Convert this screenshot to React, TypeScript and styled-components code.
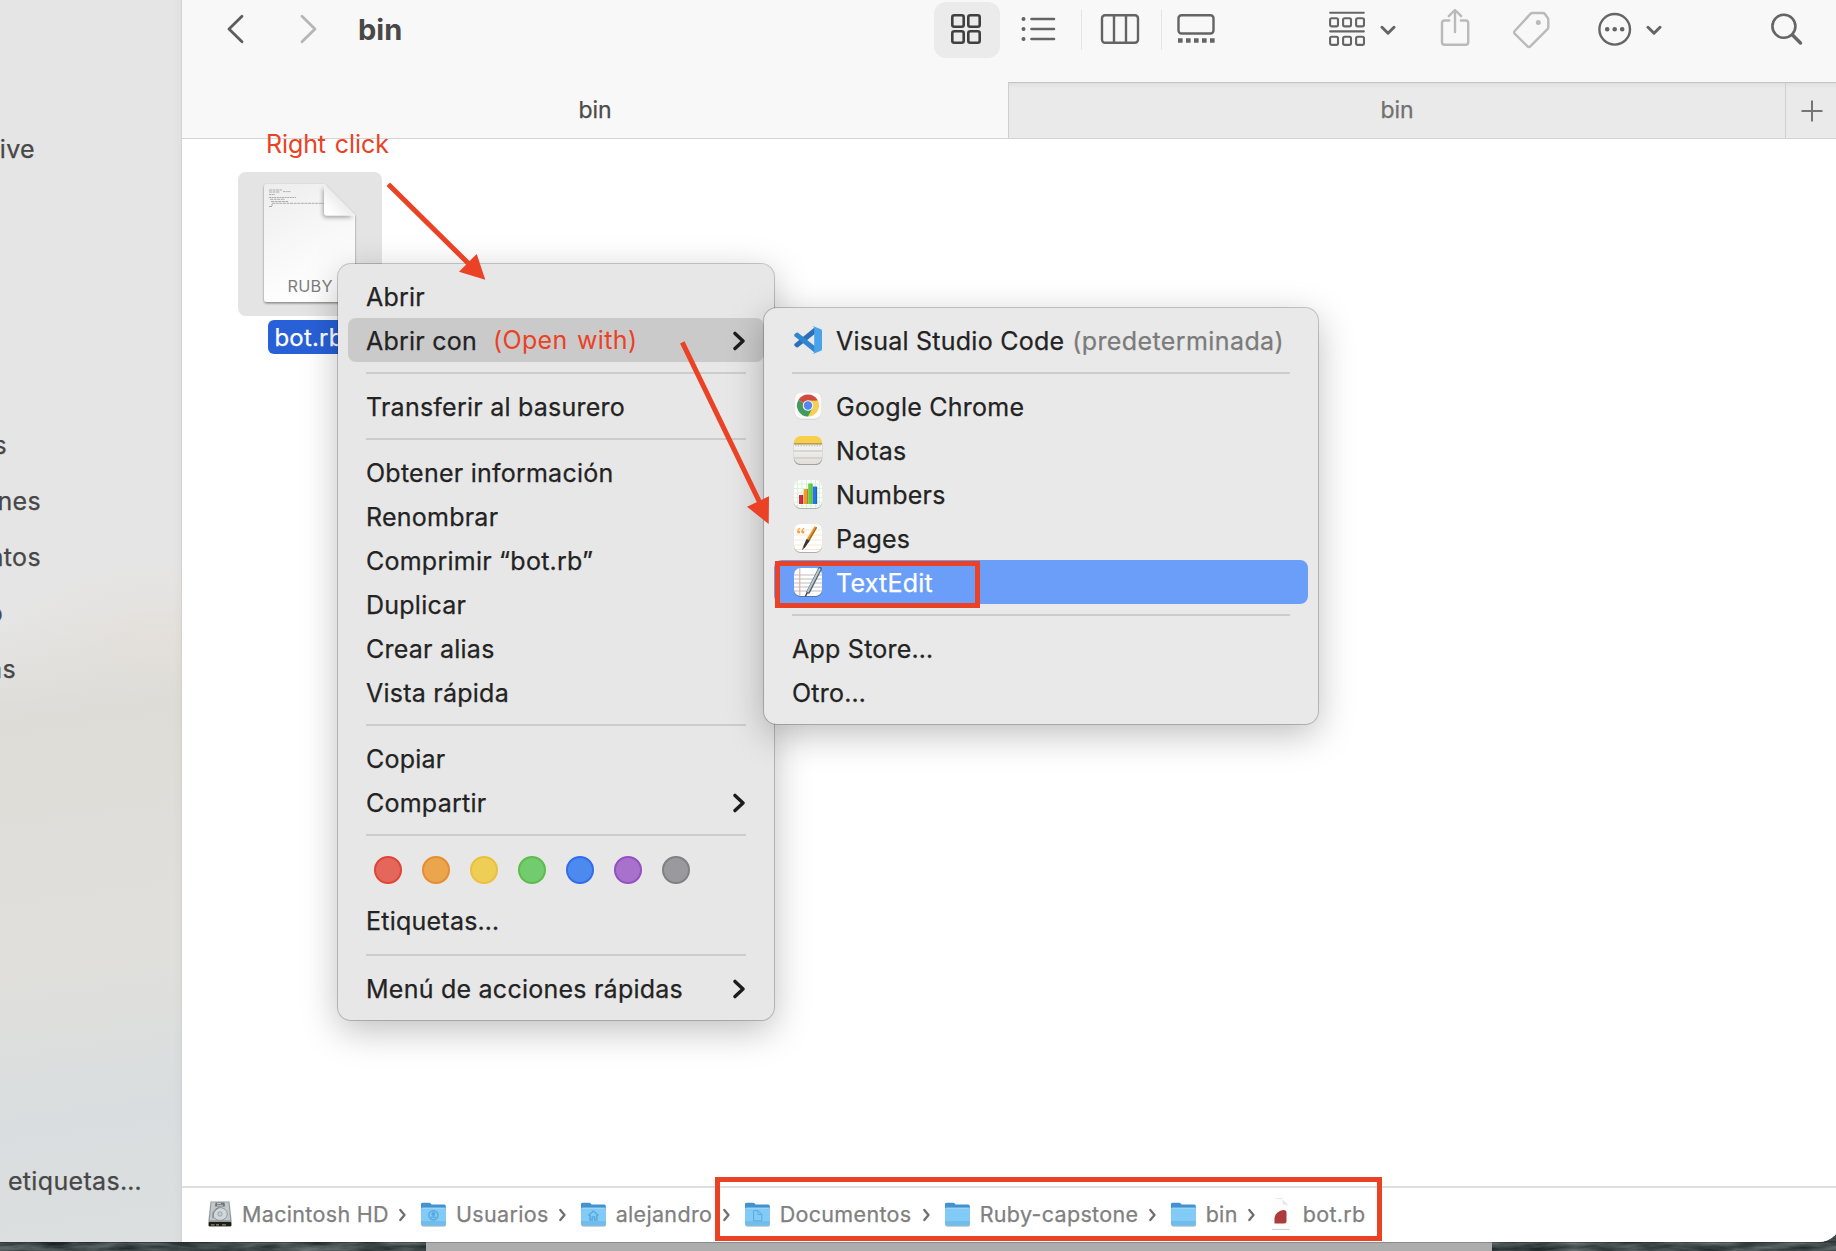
import React from "react";
import styled, { createGlobalStyle, css } from "styled-components";

const RED = "#eb4125";
const FONT = `Inter, "Liberation Sans", sans-serif`;

const GlobalStyle = createGlobalStyle`
  * { box-sizing: border-box; }
  body { margin: 0; overflow: hidden; background: #3c4546; }
`;

/* ---------- window frame ---------- */

const Desktop = styled.div`
  position: relative;
  width: 1836px;
  height: 1251px;
  overflow: hidden;
  font-family: ${FONT};
  font-size: 25px;
  letter-spacing: 0.24px;
  -webkit-text-stroke: 0.25px currentColor;
  color: #232323;
  white-space: nowrap;
`;

const Wallpaper = styled.svg`
  position: absolute;
  left: 0;
  bottom: 0;
`;

const Window = styled.div`
  position: relative;
  display: flex;
  width: 1841px;
  height: 1242px;
  background: #fff;
  border-radius: 0 0 22px 0;
  overflow: hidden;
`;

const Sidebar = styled.nav`
  display: flex;
  flex-direction: column;
  flex: 0 0 182px;
  padding-top: 121px;
  border-right: 1px solid #d3d3d3;
  color: #474747;
  letter-spacing: 0.35px;
  overflow: hidden;
  background:
    linear-gradient(90deg, transparent 96%, rgba(0, 0, 0, 0.025)),
    radial-gradient(ellipse 180px 75px at 182px 635px, rgba(230, 221, 212, 0.5), transparent),
    linear-gradient(172deg, #e5e5e5 0%, #e5e5e5 49%, #dddcd7 57%, #deddd8 63%, #e1dfdb 73%, #dedfdd 81%, #d9dddf 89%, #dbdfdf 100%);
`;

const SidebarItem = styled.div<{ $end: number; $before?: number }>`
  display: flex;
  justify-content: flex-end;
  align-items: center;
  flex: 0 0 56px;
  width: ${(p) => p.$end}px;
  margin-top: ${(p) => p.$before ?? 0}px;
`;

const Main = styled.main`
  display: flex;
  flex-direction: column;
  flex: 1;
`;

/* ---------- toolbar ---------- */

const Toolbar = styled.header`
  display: flex;
  align-items: flex-start;
  flex: 0 0 82px;
  background: #f8f8f8;
  color: #646464;
`;

const Navigation = styled.div`
  display: flex;
  align-items: center;
  flex: 0 0 752px;
  height: 58px;
  padding-left: 44px;
`;

const NavButton = styled.span<{ $dim?: boolean }>`
  display: flex;
  width: 73px;
  color: ${(p) => (p.$dim ? "#b6b6b6" : "#5d5d5d")};
`;

const Title = styled.h1`
  margin: 0 0 0 -14px;
  font-size: 29px;
  font-weight: 700;
  letter-spacing: 0;
  -webkit-text-stroke: 0;
  color: #484848;
`;

const ViewButton = styled.span<{ $width: number; $active?: boolean }>`
  display: flex;
  justify-content: center;
  width: ${(p) => p.$width}px;
  height: 58px;
  padding-right: 3px;
  ${(p) =>
    p.$active &&
    css`
      color: #404040;
      background: linear-gradient(#ebebeb, #ebebeb) 0 2px no-repeat;
      clip-path: inset(2px 0 0 0 round 12px);
    `}
`;

const ViewDivider = styled.i`
  width: 1px;
  height: 40px;
  margin-top: 10px;
  background: #e5e5e5;
`;

const ToolbarItem = styled.span<{ $before: number; $dim?: boolean }>`
  display: flex;
  margin-left: ${(p) => p.$before}px;
  color: ${(p) => (p.$dim ? "#bababa" : "#656565")};
`;

const Glyph = ({ w, children, sw = 2.4 }: { w: number; children: React.ReactNode; sw?: number }) => (
  <svg width={w} height="58" viewBox={`0 0 ${w} 58`} fill="none" stroke="currentColor" strokeWidth={sw} strokeLinecap="round" strokeLinejoin="round">
    {children}
  </svg>
);

const DownChevron = () => (
  <Glyph w={16} sw={3}>
    <path d="M2 27.3l6 5.9 6-5.9" />
  </Glyph>
);

/* ---------- tabs ---------- */

const TabBar = styled.div`
  display: flex;
  flex: 0 0 57px;
  background: #f8f8f8;
  border-bottom: 1px solid #d4d4d4;
  font-size: 23px;
  letter-spacing: 0;
`;

const Tab = styled.div<{ $width: number; $active?: boolean }>`
  display: flex;
  align-items: center;
  justify-content: center;
  width: ${(p) => p.$width}px;
  color: ${(p) => (p.$active ? "#4b4b4b" : "#707070")};
  ${(p) =>
    !p.$active &&
    css`
      padding-bottom: 1px;
      border-top: 1px solid #c3c3c3;
      border-left: 1px solid #cfcfcf;
      background: linear-gradient(#dfdfdf, #eaeaea 5px);
    `}
`;

const NewTab = styled(Tab)`
  justify-content: flex-start;
  padding: 1px 0 0 15px;
`;

/* ---------- file area ---------- */

const Content = styled.section`
  position: relative;
  flex: 1;
  background: #fff;
`;

const FileItem = styled.figure`
  display: flex;
  flex-direction: column;
  align-items: center;
  width: 144px;
  margin: 33px 0 0 56px;
`;

const FileThumb = styled.div`
  display: flex;
  justify-content: center;
  width: 144px;
  height: 144px;
  border-radius: 8px;
  background: #e4e4e4;
`;

const FileName = styled.figcaption`
  display: flex;
  align-items: center;
  height: 34px;
  margin-top: 4px;
  padding: 0 8px 0 6px;
  border-radius: 6px;
  background: #2860d8;
  color: #fff;
  font-size: 24px;
  letter-spacing: 0.2px;
`;

/* ---------- path bar ---------- */

const PathBar = styled.footer`
  display: flex;
  align-items: center;
  flex: 0 0 56px;
  padding: 0 0 2px 25px;
  border-top: 2px solid #dfdfdf;
  background: #fff;
  font-size: 21.5px;
  letter-spacing: 0.33px;
  color: #808080;
`;

const Crumb = styled.span<{ $width: number }>`
  display: flex;
  align-items: center;
  gap: 9px;
  flex: 0 0 ${(p) => p.$width}px;
`;

const CrumbArrow = styled.svg`
  margin: 2px 13px 0 auto;
`;

/* ---------- menus ---------- */

const Menu = styled.div<{ $x: number; $y: number; $width: number; $light?: boolean }>`
  position: absolute;
  left: ${(p) => p.$x}px;
  top: ${(p) => p.$y}px;
  width: ${(p) => p.$width}px;
  display: flex;
  flex-direction: column;
  padding: 10px;
  border-radius: 13px;
  background: ${(p) => (p.$light ? "#e9e9e9" : "#e7e7e7")};
  box-shadow: 0 0 0 1px rgba(0, 0, 0, 0.2), 0 10px 36px rgba(0, 0, 0, 0.26);
`;

const MenuRow = styled.div<{ $state?: "open" | "selected" }>`
  display: flex;
  align-items: center;
  height: 44px;
  padding: 2px 18px 0;
  border-radius: 8px;
  ${(p) => p.$state === "open" && css`background: #cacaca;`}
  ${(p) => p.$state === "selected" && css`background: #6b9ef8; color: #fff;`}
`;

const Separator = styled.hr`
  width: calc(100% - 36px);
  height: 2px;
  margin: 10px 18px;
  border: 0;
  background: #cccccc;
`;

const AppIcon = styled.svg`
  flex: 0 0 30px;
  margin: -2px 13px 0 1px;
`;

const Muted = styled.span`
  margin-left: 8px;
  color: #7b7b7b;
  letter-spacing: 0.4px;
`;

const SubmenuArrow = styled.svg`
  margin: -1px 0 0 auto;
`;

const TagRow = styled.div`
  display: flex;
  gap: 20px;
  height: 52px;
  padding: 10px 26px 0;
`;

const TagDot = styled.i<{ $fill: string; $edge: string }>`
  width: 28px;
  height: 28px;
  border-radius: 50%;
  background: ${(p) => p.$fill};
  border: 2px solid ${(p) => p.$edge};
`;

const TagsLabel = styled(MenuRow)`
  margin-bottom: 2px;
`;

/* ---------- annotations ---------- */

const Note = styled.span<{ $x: number; $y: number; $spacing: number }>`
  position: absolute;
  left: ${(p) => p.$x}px;
  top: ${(p) => p.$y}px;
  line-height: 30px;
  letter-spacing: ${(p) => p.$spacing}px;
  word-spacing: 2px;
  -webkit-text-stroke: 0;
  color: ${RED};
`;

const Frame = styled.div<{ $x: number; $y: number; $w: number; $h: number }>`
  position: absolute;
  left: ${(p) => p.$x}px;
  top: ${(p) => p.$y}px;
  width: ${(p) => p.$w}px;
  height: ${(p) => p.$h}px;
  border: 5px solid ${RED};
`;

const Arrows = styled.svg`
  position: absolute;
  left: 380px;
  top: 175px;
`;

/* ---------- drawings ---------- */

const Arrow = () => (
  <SubmenuArrow width="14" height="20" viewBox="0 0 14 20" fill="none" stroke="#1c1c1c" strokeWidth="3.4" strokeLinecap="round" strokeLinejoin="round">
    <path d="M3 2.4l8 7.6-8 7.6" />
  </SubmenuArrow>
);

const RubyFile = () => (
  <svg width="112" height="144" viewBox="0 0 112 144">
    <defs>
      <linearGradient id="paper" x1="0" y1="0" x2="0.35" y2="1">
        <stop offset="0" stopColor="#ededed" />
        <stop offset="0.45" stopColor="#f6f6f6" />
        <stop offset="1" stopColor="#fff" />
      </linearGradient>
      <linearGradient id="fold" x1="0.15" y1="0.85" x2="0.6" y2="0.4">
        <stop offset="0" stopColor="#fff" />
        <stop offset="1" stopColor="#e9e9e9" />
      </linearGradient>
      <filter id="soft" x="-20%" y="-20%" width="140%" height="140%">
        <feDropShadow dx="0" dy="1.3" stdDeviation="1.2" floodOpacity="0.45" />
      </filter>
      <filter id="foldShade" x="-40%" y="-40%" width="180%" height="180%">
        <feDropShadow dx="-1" dy="2" stdDeviation="2" floodOpacity="0.35" />
      </filter>
    </defs>
    <path d="M12.5 12H71L101 43V127a3 3 0 0 1-3 3H13a3 3 0 0 1-3-3V15a3 3 0 0 1 3-3z" fill="url(#paper)" filter="url(#soft)" />
    <path d="M70 13L100 43.5H73a3 3 0 0 1-3-3z" fill="url(#fold)" filter="url(#foldShade)" />
    <g stroke="#8c8c8c" strokeWidth="0.9" opacity="0.75">
      <path d="M15 18h13M15 20h11" strokeDasharray="3 .5" />
      <path d="M29 19.6h8M15 22.5h6M15 25.5h27" strokeDasharray="2 .6" />
      <path d="M16 27.3h15M17 29.5h17M18 31.3h52" strokeDasharray="3 .6" />
      <path d="M17 33h2M15 34.5h3" />
    </g>
    <text x="33.5" y="120" fontFamily="Inter" fontSize="16.3" fill="#7d7d7d">RUBY</text>
  </svg>
);

const VSCodeIcon = () => (
  <AppIcon width="30" height="30" viewBox="0 0 30 30">
    <path d="M21.5 2.5L1.6 18.8a1.4 1.4 0 0 0 0 2l1.7 1.5a1.4 1.4 0 0 0 1.7 0L23 8z" fill="#2a6fb8" />
    <path d="M21.5 27.5L1.6 11.2a1.4 1.4 0 0 1 0-2l1.7-1.5a1.4 1.4 0 0 1 1.7 0L23 22z" fill="#3185cf" />
    <path d="M20.5 1.2L28 4.3a1.7 1.7 0 0 1 1 1.5v18.4a1.7 1.7 0 0 1-1 1.5l-7.5 3.1c-.7.2-1 0-1.2-.3 1 .2 1.9-.4 1.9-1.7V3.3c0-1.400-1-1.900-1.900-1.700.2-.4.6-.6 1.200-.4z" fill="#4aa3ea" />
  </AppIcon>
);

const Tile = ({ fill = "#fff" }: { fill?: string }) => (
  <>
    <rect x="1" y="2" width="28" height="28" rx="6.5" fill="#000" opacity="0.25" />
    <rect x="1" y="1" width="28" height="28" rx="6.5" fill={fill} />
  </>
);

const ChromeIcon = () => (
  <AppIcon width="30" height="30" viewBox="0 0 30 30">
    <rect x="2" y="2.5" width="26" height="26" rx="6" fill="#000" opacity="0.13" />
    <rect x="2" y="1.7" width="26" height="26" rx="6" fill="#fbfbfb" />
    <path d="M15 14.5L5.470 9A11 11 0 0 1 24.530 9z" fill="#cf4b3e" />
    <path d="M15 14.5L24.530 9A11 11 0 0 1 15 25.5z" fill="#f7cf55" />
    <path d="M15 14.5L15 25.5A11 11 0 0 1 5.470 9z" fill="#3f9c5c" />
    <path d="M15 9.3h9.7l.6 1.7-5.500 3.500z" fill="#f7cf55" />
    <path d="M15 9.5h9.5L23.5 8H14z" fill="#cf4b3e" />
    <path d="M10.5 17.1L5.470 9 8 12l4.500 6z" fill="#cf4b3e" />
    <path d="M19.5 17.1L15 25.5l-2-1 2.800-5.500z" fill="#3f9c5c" />
    <circle cx="15" cy="14.5" r="5.3" fill="#f2f4f4" />
    <circle cx="15" cy="14.5" r="4.2" fill="#5288ee" />
  </AppIcon>
);

const NotesIcon = () => (
  <AppIcon width="30" height="30" viewBox="0 0 30 30">
    <linearGradient id="notePaper" x1="0" y1="0" x2="0" y2="1">
      <stop offset="0.3" stopColor="#f6f5f3" />
      <stop offset="1" stopColor="#e2dfd8" />
    </linearGradient>
    <rect x="0.8" y="1.8" width="28.4" height="28.4" rx="6.7" fill="#000" opacity="0.3" />
    <rect x="1" y="1" width="28" height="28" rx="6.5" fill="url(#notePaper)" />
    <path d="M1 8.500v-1A6.500 6.500 0 0 1 7.500 1h15A6.500 6.500 0 0 1 29 7.500v1z" fill="#f8cf49" />
    <path d="M1 8.900h28" stroke="#9b8340" strokeWidth="1.2" />
    <path d="M2 10.800h26" stroke="#b9b7b3" strokeWidth="1" strokeDasharray="1.5 1.2" />
    <path d="M1 16h28M1 23h28" stroke="#bfbfc4" strokeWidth="1" />
  </AppIcon>
);

const NumbersIcon = () => (
  <AppIcon width="30" height="30" viewBox="0 0 30 30">
    <Tile fill="#fcfffc" />
    <path d="M4.5 2v26M9 1v28M13.500 1v28M18 1v28M22.500 1v28M26.500 2v26M2 5h26M1 9.500h28M1 14h28M1 18.500h28M1 23h28M3 27h24" stroke="#d4efd3" strokeWidth="0.8" />
    <rect x="6" y="16" width="4.2" height="9" fill="#d52d3f" />
    <rect x="10.7" y="10" width="4.3" height="15" fill="#ee9a2c" />
    <rect x="15.2" y="4.5" width="4.3" height="20.5" fill="#5fd043" />
    <rect x="19.8" y="7.5" width="4.3" height="17.5" fill="#2376e3" />
    <path d="M9.800 16v9M14.600 10v15M19.200 5v20M23.700 8v17" stroke="#000" strokeWidth="0.8" opacity="0.25" />
  </AppIcon>
);

const PagesIcon = () => (
  <AppIcon width="30" height="30" viewBox="0 0 30 30">
    <Tile />
    <path d="M2 7h26M1 12h28M1 17h28M1 22h28M3 26.500h24" stroke="#f8e6d2" strokeWidth="1" />
    <g fill="#f2a541">
      <circle cx="5.7" cy="9" r="1.6" />
      <circle cx="9.9" cy="9" r="1.6" />
      <path d="M4.100 9c0-2.400 1-3.800 3-4.300v1C6 6.200 5.500 7 5.500 8.500zM8.300 9c0-2.400 1-3.800 3-4.300v1c-1.100.5-1.600 1.300-1.600 2.800z" />
    </g>
    <path d="M21.600 3.200l2.500 1.400-8.500 14.800-3-1.700z" fill="#e99b2f" />
    <path d="M23 4l1.100.6-8.500 14.800-1.300-.8z" fill="#a8681c" />
    <path d="M13.600 16.100l3 1.700-4.400 6.400-2.400 1.700.6-3z" fill="#34353a" />
    <path d="M10.400 24.200l-.9 2.600" stroke="#55565b" strokeWidth="0.9" />
  </AppIcon>
);

const TextEditIcon = () => (
  <AppIcon width="30" height="30" viewBox="0 0 30 30">
    <Tile />
    <path d="M1 8h28M1 12h28M1 16h28M1 20h28M1 24h28" stroke="#bdbdbd" strokeWidth="1.1" />
    <path d="M6.800 1v28" stroke="#eda3a3" strokeWidth="1.1" />
    <path d="M27.300.2L12.300 29.500" stroke="#3e4a55" strokeWidth="1.5" />
    <path d="M27 1.800L15.300 24.800" stroke="#56636e" strokeWidth="3.8" strokeLinecap="round" />
    <path d="M26.500 2.200L15 24.200" stroke="#b9c9d4" strokeWidth="1.9" strokeLinecap="round" />
  </AppIcon>
);

const FolderIcon = ({ mark }: { mark?: "user" | "home" | "doc" }) => (
  <svg width="27" height="28" viewBox="0 0 27 28">
    <rect x="1.5" y="8" width="24.5" height="18.7" rx="1.8" fill="#000" opacity="0.25" />
    <path d="M1 4.200Q1 2.800 2.400 2.800h6.800q.9 0 1.500.7l.9.900h12.700q1.500 0 1.500 1.500V10H1z" fill="#4392cf" />
    <rect x="1" y="7.7" width="24.8" height="17.8" rx="1.8" fill="#82cbf7" />
    <path d="M1 21h24.800v3a1.700 1.700 0 0 1-1.700 1.700H2.700A1.700 1.700 0 0 1 1 24z" fill="#70bdec" />
    <path d="M1.500 8.200h24" stroke="#a5defd" strokeWidth="0.9" />
    <g fill="none" stroke="#5aaadd" strokeWidth="1.5">
      {mark === "user" && (
        <>
          <circle cx="13.400" cy="15.300" r="4.600" />
          <circle cx="13.400" cy="14" r="1.300" fill="#4b9fd6" />
          <path d="M10.600 17.900q2.800-2 5.600 0" />
        </>
      )}
      {mark === "home" && <path d="M8.300 15.500l5.100-4.500 5.100 4.500M10 15v5h2.200v-3h2.400v3h2.200v-5" />}
      {mark === "doc" && <path d="M9.600 10.600h4.500l3.700 3.700v6.500H9.600zM14 10.600v3.900h3.800" strokeWidth="1" />}
    </g>
  </svg>
);

const DiskIcon = () => (
  <svg width="26" height="28" viewBox="0 0 26 28">
    <path d="M3.500 1.500h19l2 18v6a1 1 0 0 1-1 1h-21a1 1 0 0 1-1-1v-6z" fill="#94999c" />
    <path d="M4.500 2.300h17l1.700 18H2.800z" fill="#c3c9cd" />
    <path d="M8.500 2.600h9l.5 4H8z" fill="#6e7478" />
    <path d="M10 3.600h4M10 5.300h6" stroke="#d7dadc" strokeWidth="0.8" />
    <ellipse cx="13" cy="14" rx="7.300" ry="6.400" fill="#d2d7db" stroke="#8a9196" strokeWidth="0.9" />
    <circle cx="13" cy="14" r="2.2" fill="#c3c9cd" stroke="#8a9196" strokeWidth="0.6" />
    <path d="M6 18.500q-1-7 6-11" stroke="#70777c" fill="none" strokeWidth="0.9" />
    <rect x="1.700" y="22" width="22.600" height="4.300" rx="0.8" fill="#1d1d1d" />
    <path d="M4 24.800h3.500M9 24.800h3M15 24.800h4" stroke="#9d8a50" strokeWidth="1.2" />
  </svg>
);

const RubyCrumbIcon = () => (
  <svg width="25" height="34" viewBox="0 0 25 34">
    <path d="M4 1.500h9l7 7V32H3V2.500z" fill="#fdfdfd" />
    <path d="M4 1h8.700q1.300 4 1 6 3 .5 6 1.700l-6-6.200z" fill="#e6e6e6" />
    <path d="M5.500 26.500v-5.800q.4-3 3-5.200 2.500-2.300 6-2.500 3-.1 3 2.500v8.500q0 2.500-2.500 2.500z" fill="#ac3c3c" />
    <path d="M3 32.500h17.500" stroke="#d4d4d4" strokeWidth="1.2" />
  </svg>
);

const Next = () => (
  <CrumbArrow width="9" height="14" viewBox="0 0 9 14" fill="none" stroke="#6f6f6f" strokeWidth="2.3" strokeLinecap="round" strokeLinejoin="round">
    <path d="M2.300 2l4.200 5-4.200 5" />
  </CrumbArrow>
);

const crumbs: { name: string; width: number; icon: React.ReactNode }[] = [
  { name: "Macintosh HD", width: 212, icon: <DiskIcon /> },
  { name: "Usuarios", width: 156, icon: <FolderIcon mark="user" /> },
  { name: "alejandro", width: 164, icon: <FolderIcon mark="home" /> },
  { name: "Documentos", width: 200, icon: <FolderIcon mark="doc" /> },
  { name: "Ruby-capstone", width: 226, icon: <FolderIcon /> },
  { name: "bin", width: 98, icon: <FolderIcon /> },
];

const tags = [
  ["#e5665a", "#df4536"],
  ["#eba54c", "#e68d31"],
  ["#efce55", "#ebc03e"],
  ["#72cb6d", "#5bbd4c"],
  ["#4d8af0", "#2f6dea"],
  ["#a872cc", "#9450c0"],
  ["#9a9a9e", "#808083"],
];

const apps: [string, React.ReactNode][] = [
  ["Google Chrome", <ChromeIcon />],
  ["Notas", <NotesIcon />],
  ["Numbers", <NumbersIcon />],
  ["Pages", <PagesIcon />],
];

export default function App() {
  return (
    <Desktop>
      <GlobalStyle />
      <Wallpaper width="1836" height="30" viewBox="0 0 1836 30">
        <filter id="rock" x="0" y="0" width="100%" height="100%" colorInterpolationFilters="sRGB">
          <feTurbulence type="fractalNoise" baseFrequency="0.025 0.16" numOctaves="4" seed="8" />
          <feColorMatrix values="0.4 0 0 0 0.06  0.4 0 0 0 0.095  0.4 0 0 0 0.1  0 0 0 0 1" />
        </filter>
        <rect width="1836" height="30" filter="url(#rock)" />
        <rect x="426" width="1066" height="30" fill="#adadad" />
        <rect y="20" width="1836" height="2" fill="#000" opacity="0.2" />
      </Wallpaper>

      <Window>
        <Sidebar>
          <SidebarItem $end={35}>rive</SidebarItem>
          <SidebarItem $end={7} $before={240}>s</SidebarItem>
          <SidebarItem $end={41}>nes</SidebarItem>
          <SidebarItem $end={41}>ntos</SidebarItem>
          <SidebarItem $end={3}>o</SidebarItem>
          <SidebarItem $end={16}>as</SidebarItem>
          <SidebarItem $end={142} $before={456}>s etiquetas…</SidebarItem>
        </Sidebar>

        <Main>
          <Toolbar>
            <Navigation>
              <NavButton>
                <Glyph w={18} sw={2.8}><path d="M16 16.200L3 29l13 12.800" /></Glyph>
              </NavButton>
              <NavButton $dim>
                <Glyph w={18} sw={2.8}><path d="M3 16.200L16 29 3 41.800" /></Glyph>
              </NavButton>
              <Title>bin</Title>
            </Navigation>

            <ViewButton $width={66} $active>
              <Glyph w={32} sw={2.6}>
                <rect x="2.3" y="15.3" width="11.400" height="11.400" rx="2" />
                <rect x="18.3" y="15.3" width="11.400" height="11.400" rx="2" />
                <rect x="2.3" y="31.3" width="11.400" height="11.400" rx="2" />
                <rect x="18.3" y="31.3" width="11.400" height="11.400" rx="2" />
              </Glyph>
            </ViewButton>
            <ViewButton $width={81}>
              <Glyph w={36} sw={2.6}>
                <path d="M10.500 19h22.500M10.500 29h22.500M10.500 39h22.500" />
                <path d="M2.500 19h.01M2.500 29h.01M2.500 39h.01" strokeWidth="4" />
              </Glyph>
            </ViewButton>
            <ViewDivider />
            <ViewButton $width={79}>
              <Glyph w={40}>
                <rect x="2" y="15.2" width="36" height="27.600" rx="3" />
                <path d="M14 15.200v27.600M26 15.200v27.600" />
              </Glyph>
            </ViewButton>
            <ViewDivider />
            <ViewButton $width={71}>
              <Glyph w={38}>
                <rect x="1.5" y="15.2" width="35" height="18.300" rx="3" />
                <path d="M1 40.500h37" strokeWidth="4.6" strokeLinecap="butt" strokeDasharray="4.6 3.4" />
              </Glyph>
            </ViewButton>

            <ToolbarItem $before={96}>
              <Glyph w={36} sw={2.1}>
                <path d="M1.200 12.800h33.600M1.200 31.400h33.600" />
                {[18.2, 36.7].map((y) =>
                  [1.1, 14.1, 27.1].map((x) => <rect key={`${x}-${y}`} x={x} y={y} width="7.9" height="8.2" rx="1.6" />)
                )}
              </Glyph>
            </ToolbarItem>
            <ToolbarItem $before={15}><DownChevron /></ToolbarItem>
            <ToolbarItem $before={44} $dim>
              <Glyph w={30}>
                <path d="M9.300 20.500H4.600q-2.600 0-2.600 2.600V42.200q0 2.600 2.600 2.600h21q2.600 0 2.600-2.600V23.100q0-2.600-2.600-2.600h-4.700M15 32V10.500M8.800 16.200L15 10l6.200 6.200" />
              </Glyph>
            </ToolbarItem>
            <ToolbarItem $before={43} $dim>
              <Glyph w={37}>
                <path d="M19.600 13h10.300q1.200 0 2 1l2.600 3.600q.8 1 .8 2.200v7.400q0 1.200-.8 2L17.300 46.400q-1.400 1.400-2.800 0L1.700 33.600q-1.200-1.300 0-2.600L17.400 13.900q.9-.9 2.200-.9z" />
                <circle cx="25.3" cy="22.5" r="1.3" fill="currentColor" />
              </Glyph>
            </ToolbarItem>
            <ToolbarItem $before={48}>
              <Glyph w={34}>
                <circle cx="16.7" cy="29.3" r="15.3" />
                <path d="M9.200 29.300h.01M16.700 29.300h.01M24.200 29.300h.01" strokeWidth="4.6" />
              </Glyph>
            </ToolbarItem>
            <ToolbarItem $before={14}><DownChevron /></ToolbarItem>
            <ToolbarItem $before={109}>
              <Glyph w={32} sw={2.6}>
                <circle cx="12.9" cy="26.3" r="11.5" />
                <path d="M21.500 35l8 8" strokeWidth="3.4" />
              </Glyph>
            </ToolbarItem>
          </Toolbar>

          <TabBar>
            <Tab $width={826} $active>bin</Tab>
            <Tab $width={777}>bin</Tab>
            <NewTab $width={56}>
              <svg width="22" height="22" viewBox="0 0 22 22" stroke="#757575" strokeWidth="2">
                <path d="M11 .5v21M.5 11h21" />
              </svg>
            </NewTab>
          </TabBar>

          <Content>
            <FileItem>
              <FileThumb><RubyFile /></FileThumb>
              <FileName>bot.rb</FileName>
            </FileItem>
          </Content>

          <PathBar>
            {crumbs.map((c) => (
              <Crumb key={c.name} $width={c.width}>
                {c.icon}
                {c.name}
                <Next />
              </Crumb>
            ))}
            <Crumb $width={110}>
              <RubyCrumbIcon />
              bot.rb
            </Crumb>
          </PathBar>
        </Main>
      </Window>

      <Menu $x={338} $y={264} $width={436}>
        <MenuRow>Abrir</MenuRow>
        <MenuRow $state="open">Abrir con<Arrow /></MenuRow>
        <Separator />
        <MenuRow>Transferir al basurero</MenuRow>
        <Separator />
        <MenuRow>Obtener información</MenuRow>
        <MenuRow>Renombrar</MenuRow>
        <MenuRow>Comprimir “bot.rb”</MenuRow>
        <MenuRow>Duplicar</MenuRow>
        <MenuRow>Crear alias</MenuRow>
        <MenuRow>Vista rápida</MenuRow>
        <Separator />
        <MenuRow>Copiar</MenuRow>
        <MenuRow>Compartir<Arrow /></MenuRow>
        <Separator />
        <TagRow>
          {tags.map(([fill, edge]) => <TagDot key={fill} $fill={fill} $edge={edge} />)}
        </TagRow>
        <TagsLabel>Etiquetas…</TagsLabel>
        <Separator />
        <MenuRow>Menú de acciones rápidas<Arrow /></MenuRow>
      </Menu>

      <Menu $x={764} $y={308} $width={554} $light>
        <MenuRow><VSCodeIcon />Visual Studio Code<Muted>(predeterminada)</Muted></MenuRow>
        <Separator />
        {apps.map(([name, icon]) => <MenuRow key={name}>{icon}{name}</MenuRow>)}
        <MenuRow $state="selected"><TextEditIcon />TextEdit</MenuRow>
        <Separator />
        <MenuRow>App Store…</MenuRow>
        <MenuRow>Otro…</MenuRow>
      </Menu>

      <Note $x={266} $y={129} $spacing={-0.1}>Right click</Note>
      <Note $x={493} $y={325} $spacing={0.35}>(Open with)</Note>
      <Frame $x={775} $y={561} $w={205} $h={47} />
      <Frame $x={715} $y={1177} $w={667} $h={64} />
      <Arrows width="410" height="370" viewBox="380 175 410 370" fill={RED} stroke={RED}>
        <path d="M388.300 184.300L470 265M682.300 342.300L760 503" strokeWidth="5" fill="none" />
        <path d="M485.300 279.700L459 271.700 476.700 254zM768.700 524L747 506.700 769 496.300z" stroke="none" />
      </Arrows>
    </Desktop>
  );
}
